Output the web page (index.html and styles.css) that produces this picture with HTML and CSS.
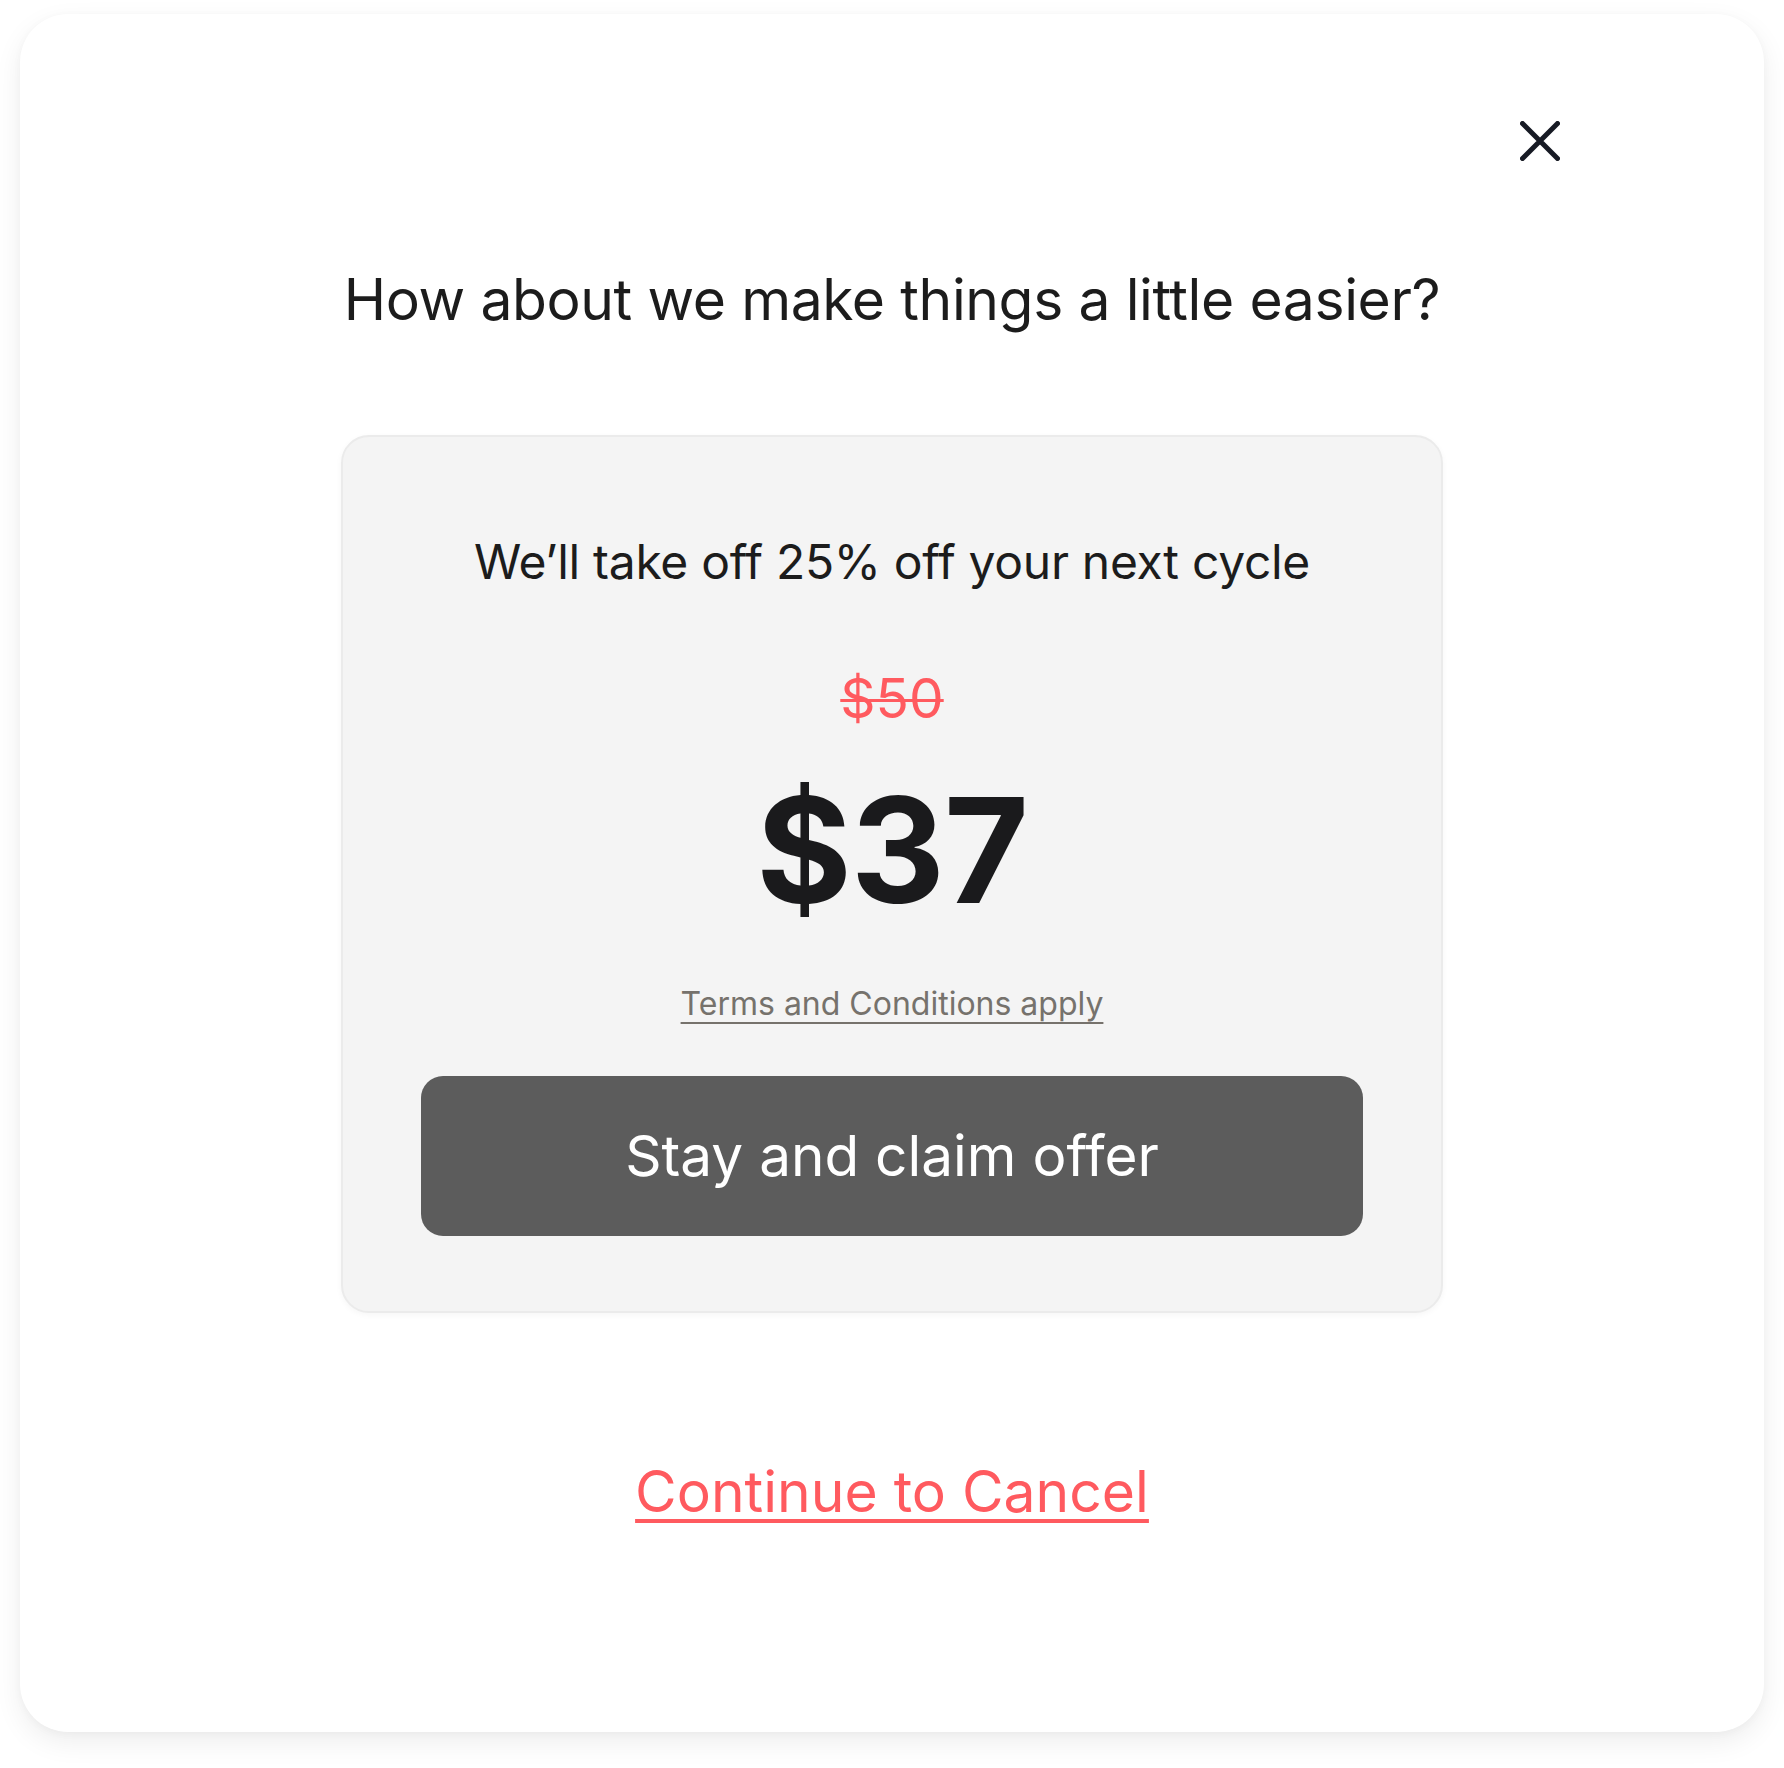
FILE: index.html
```html
<!DOCTYPE html>
<html lang="en">
<head>
<meta charset="utf-8">
<title>Offer</title>
<link rel="stylesheet" href="styles.css">
</head>
<body>
<div class="modal">
  <div class="modal-head">
    <button class="close" aria-label="Close">
      <svg width="40" height="40" viewBox="0 0 40 40"><path d="M2.5 2.5 L37.5 37.5 M37.5 2.5 L2.5 37.5" stroke="#171a24" stroke-width="5" stroke-linecap="round" fill="none"/></svg>
    </button>
  </div>
  <h1 class="title">How about we make things a little easier?</h1>
  <div class="card">
    <p class="card-text">We’ll take off 25% off your next cycle</p>
    <p class="old-price">$50</p>
    <p class="new-price">$37</p>
    <a class="terms" href="#">Terms and Conditions apply</a>
    <button class="claim">Stay and claim offer</button>
  </div>
  <a class="cancel" href="#">Continue to Cancel</a>
</div>
</body>
</html>
```

FILE: styles.css
```css
html, body {
  margin: 0;
  padding: 0;
  background: #ffffff;
}
body {
  font-family: Inter, "Noto Sans", sans-serif;
  padding: 14px 20px 36px;
}
.modal {
  background: #ffffff;
  border-radius: 48px;
  box-shadow: 0 10px 28px rgba(0, 0, 0, 0.07), 0 2px 8px rgba(0, 0, 0, 0.03);
  height: 1718px;
  box-sizing: border-box;
  display: flex;
  flex-direction: column;
  align-items: center;
}
.modal-head {
  align-self: stretch;
  display: flex;
  justify-content: flex-end;
  padding: 107px 204px 0 0;
}
.close {
  display: block;
  width: 40px;
  height: 40px;
  padding: 0;
  border: 0;
  background: none;
}
.close svg {
  display: block;
}
.title {
  margin: 105px 0 0;
  font-size: 57px;
  line-height: 1.2;
  font-weight: 400;
  color: #1c1c1c;
  letter-spacing: -0.4px;
  text-align: center;
}
.card {
  margin-top: 101px;
  width: 1102px;
  box-sizing: border-box;
  background: #f4f4f4;
  border: 2px solid #ebebeb;
  border-radius: 28px;
  box-shadow: 0 2px 6px rgba(0, 0, 0, 0.04);
  padding: 0 78px 75px;
  display: flex;
  flex-direction: column;
  align-items: center;
}
.card-text {
  margin: 96px 0 0;
  font-size: 48px;
  line-height: 1.2;
  letter-spacing: -0.3px;
  color: #1c1c1c;
}
.old-price {
  margin: 74px 0 0;
  font-size: 55px;
  line-height: 1.2;
  color: #ff5a5f;
  text-decoration: line-through;
  text-decoration-thickness: 3px;
}
.new-price {
  margin: 32px 0 0;
  font-size: 146px;
  line-height: 1.2;
  font-weight: 700;
  color: #1a1a1c;
  letter-spacing: -1px;
}
.terms {
  margin-top: 47px;
  font-size: 32px;
  line-height: 1.2;
  color: #76726c;
  text-decoration: underline;
  text-decoration-thickness: 2px;
  text-underline-offset: 7px;
}
.claim {
  margin-top: 52px;
  width: 100%;
  height: 160px;
  border: 0;
  border-radius: 22px;
  background: #5c5c5c;
  color: #ffffff;
  font-family: Inter, "Noto Sans", sans-serif;
  font-size: 56.7px;
  font-weight: 400;
  display: flex;
  align-items: center;
  justify-content: center;
}
.cancel {
  margin-top: 145px;
  font-size: 57px;
  line-height: 1.2;
  color: #ff5a5f;
  text-decoration: underline;
  text-decoration-thickness: 4px;
  text-underline-offset: 7px;
}
```
